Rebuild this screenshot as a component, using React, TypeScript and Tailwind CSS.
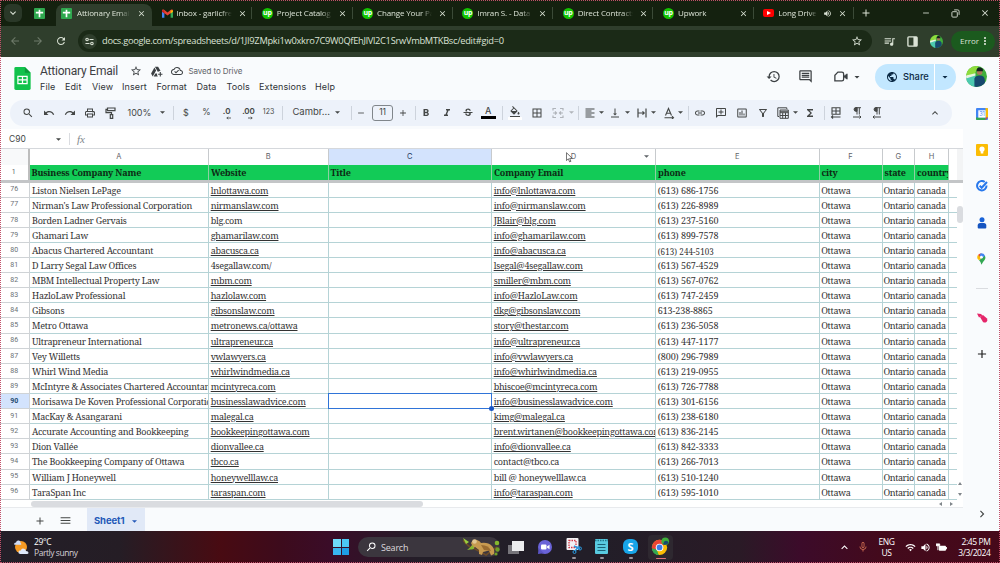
import React, { FC, ReactNode } from "react";
import {
  MdAdd,
  MdArrowBack,
  MdArrowDropDown,
  MdArrowForward,
  MdBorderAll,
  MdChevronRight,
  MdClose,
  MdExpandLess,
  MdFormatAlignLeft,
  MdFormatBold,
  MdFormatColorFill,
  MdFormatItalic,
  MdFunctions,
  MdHistory,
  MdInsertChartOutlined,
  MdKeyboardArrowDown,
  MdLink,
  MdMenu,
  MdMicNone,
  MdMoreVert,
  MdOutlineAddComment,
  MdOutlineAddToDrive,
  MdOutlineCloudDone,
  MdOutlineComment,
  MdOutlineFilterAlt,
  MdOutlinePrint,
  MdPublic,
  MdQueueMusic,
  MdRedo,
  MdRefresh,
  MdRemove,
  MdSearch,
  MdStarBorder,
  MdStrikethroughS,
  MdUndo,
  MdVerticalAlignBottom,
  MdVolumeUp,
  MdWifi,
} from "react-icons/md";

const COLS =
  "grid grid-cols-[29.5px_179.5px_119.5px_163.5px_164px_163.5px_63px_32.5px_34px_8px]";

interface IRow {
  n: number;
  name: string;
  site: string;
  email: string;
  phone: string;
  plainSite?: boolean;
  plainEmail?: boolean;
}

const rows: IRow[] = [
  { n: 76, name: "Liston Nielsen LePage", site: "lnlottawa.com", email: "info@lnlottawa.com", phone: "(613) 686-1756" },
  { n: 77, name: "Nirman's Law Professional Corporation", site: "nirmanslaw.com", email: "info@nirmanslaw.com", phone: "(613) 226-8989" },
  { n: 78, name: "Borden Ladner Gervais", site: "blg.com", email: "JBlair@blg.com", phone: "(613) 237-5160", plainSite: true },
  { n: 79, name: "Ghamari Law", site: "ghamarilaw.com", email: "info@ghamarilaw.com", phone: "(613) 899-7578" },
  { n: 80, name: "Abacus Chartered Accountant", site: "abacusca.ca", email: "info@abacusca.ca", phone: "(613) 244-5103" },
  { n: 81, name: "D Larry Segal Law Offices", site: "4segallaw.com/", email: "lsegal@4segallaw.com", phone: "(613) 567-4529", plainSite: true },
  { n: 82, name: "MBM Intellectual Property Law", site: "mbm.com", email: "smiller@mbm.com", phone: "(613) 567-0762" },
  { n: 83, name: "HazloLaw Professional", site: "hazlolaw.com", email: "info@HazloLaw.com", phone: "(613) 747-2459" },
  { n: 84, name: "Gibsons", site: "gibsonslaw.com", email: "dkg@gibsonslaw.com", phone: "613-238-8865" },
  { n: 85, name: "Metro Ottawa", site: "metronews.ca/ottawa", email: "story@thestar.com", phone: "(613) 236-5058" },
  { n: 86, name: "Ultrapreneur International", site: "ultrapreneur.ca", email: "info@ultrapreneur.ca", phone: "(613) 447-1177" },
  { n: 87, name: "Vey Willetts", site: "vwlawyers.ca", email: "info@vwlawyers.ca", phone: "(800) 296-7989" },
  { n: 88, name: "Whirl Wind Media", site: "whirlwindmedia.ca", email: "info@whirlwindmedia.ca", phone: "(613) 219-0955" },
  { n: 89, name: "McIntyre & Associates Chartered Accountants", site: "mcintyreca.com", email: "bhiscoe@mcintyreca.com", phone: "(613) 726-7788" },
  { n: 90, name: "Morisawa De Koven Professional Corporation", site: "businesslawadvice.com", email: "info@businesslawadvice.com", phone: "(613) 301-6156" },
  { n: 91, name: "MacKay & Asangarani", site: "malegal.ca", email: "kimg@malegal.ca", phone: "(613) 238-6180" },
  { n: 92, name: "Accurate Accounting and Bookkeeping", site: "bookkeepingottawa.com", email: "brent.wirtanen@bookkeepingottawa.com", phone: "(613) 836-2145" },
  { n: 93, name: "Dion Vallée", site: "dionvallee.ca", email: "info@dionvallee.ca", phone: "(613) 842-3333" },
  { n: 94, name: "The Bookkeeping Company of Ottawa", site: "tbco.ca", email: "contact@tbco.ca", phone: "(613) 266-7013", plainEmail: true },
  { n: 95, name: "William J Honeywell", site: "honeywelllaw.ca", email: "bill @ honeywelllaw.ca", phone: "(613) 510-1240", plainEmail: true },
  { n: 96, name: "TaraSpan Inc", site: "taraspan.com", email: "info@taraspan.com", phone: "(613) 595-1010" },
];

const SheetsGlyph: FC = () => (
  <svg viewBox="0 0 12 12" className="w-[11px] h-[11px] shrink-0">
    <rect width="12" height="12" rx="1" fill="#2fa84f" />
    <path d="M2 5h8M6 2v8" stroke="#fff" strokeWidth="1.8" />
  </svg>
);

const GmailGlyph: FC = () => (
  <svg viewBox="0 0 12 9" className="w-[11px] h-[9px] shrink-0">
    <path d="M0 1.5V9h2.6V4z" fill="#4285f4" />
    <path d="M12 1.5V9H9.4V4z" fill="#34a853" />
    <path d="M0 1.2C0 0 1.400-.3 2.300.5L6 3.400 9.700.5C10.600-.3 12 0 12 1.200L11.900 2.400 6 6.800.1 2.400z" fill="#ea4335" />
    <path d="M9.400 1v3.600L12 2.600V1.200z" fill="#fbbc04" />
    <path d="M2.600 1v3.600L0 2.600V1.200z" fill="#c5221f" />
  </svg>
);

const UpworkGlyph: FC = () => (
  <div className="w-[11px] h-[11px] shrink-0 rounded-full bg-[#14c400] flex items-center justify-center">
    <span className="text-[7px] leading-none font-bold text-white -mt-px tracking-[-0.3px]">up</span>
  </div>
);

const YoutubeGlyph: FC = () => (
  <div className="w-[11px] h-2 shrink-0 rounded-[2px] bg-[#f00] flex items-center justify-center">
    <svg viewBox="0 0 4 4" className="w-1 h-1">
      <path d="M0 0l4 2-4 2z" fill="#fff" />
    </svg>
  </div>
);

interface ITab {
  icon: ReactNode;
  title: string;
  sound?: boolean;
}

const tabs: ITab[] = [
  { icon: <GmailGlyph />, title: "Inbox - garlicfresh" },
  { icon: <UpworkGlyph />, title: "Project Catalog -" },
  { icon: <UpworkGlyph />, title: "Change Your Pass" },
  { icon: <UpworkGlyph />, title: "Imran S. - Data E" },
  { icon: <UpworkGlyph />, title: "Direct Contracts" },
  { icon: <UpworkGlyph />, title: "Upwork" },
  { icon: <YoutubeGlyph />, title: "Long Drive", sound: true },
];

const TabStrip: FC = () => (
  <div className="h-[26px] bg-[#14210f] flex items-end text-[#dbe3d6] text-[8px] tracking-[-0.15px] font-['Open_Sans','Noto_Sans',sans-serif]">
    <div className="w-[18px] h-[18px] ml-1 mb-1 rounded-md bg-[#2a3828] flex items-center justify-center">
      <MdKeyboardArrowDown className="w-3 h-3" />
    </div>
    <div className="ml-3 mb-[7px]">
      <SheetsGlyph />
    </div>
    <div className="ml-[11px] w-[96px] h-[22px] rounded-t-lg bg-[#2f3e2c] flex items-center pl-[5px] pb-[4px]">
      <SheetsGlyph />
      <div className="ml-[5px] w-[53px] overflow-hidden whitespace-nowrap [mask-image:linear-gradient(to_right,black_80%,transparent)]">
        Attionary Email
      </div>
      <MdClose className="ml-[7px] w-[9px] h-[9px]" />
    </div>
    {tabs.map((tab, i) => (
      <div key={i} className="w-[100.3px] h-[26px] flex items-center pl-[9.5px]">
        {tab.icon}
        <div
          className={`${tab.sound ? "w-[39px]" : "w-[55px]"} ml-[4px] shrink-0 overflow-hidden whitespace-nowrap [mask-image:linear-gradient(to_right,black_80%,transparent)]`}
        >
          {tab.title}
        </div>
        {tab.sound && <MdVolumeUp className="ml-[6px] w-[9px] h-[9px] shrink-0" />}
        <MdClose className="ml-[6px] w-[9px] h-[9px] shrink-0" />
        <div className="ml-auto w-px h-3 bg-[#3b4a37]" />
      </div>
    ))}
    <MdAdd className="ml-[6px] mb-[7px] w-3 h-3" />
    <div className="ml-auto h-[26px] flex items-center gap-5 pr-2.5">
      <MdRemove className="w-[10px] h-[10px]" />
      <svg viewBox="0 0 10 10" className="w-[9px] h-[9px]" fill="none" stroke="#dbe3d6">
        <rect x="1" y="3" width="6" height="6" rx="1" />
        <path d="M3.500 1h4Q9 1 9 2.500v4" />
      </svg>
      <MdClose className="w-[10px] h-[10px]" />
    </div>
  </div>
);

// small round portrait used in both the browser and the document header
const Avatar: FC<{ customClass: string }> = ({ customClass }) => (
  <svg viewBox="0 0 20 20" className={`${customClass} rounded-full`}>
    <rect width="20" height="20" fill="#3fae3c" />
    <path d="M0 0h12L8 8 0 10z" fill="#8fdc3d" />
    <path d="M0 10l9-2v12H0z" fill="#4cc9b0" />
    <path d="M0 9l9-2v2l-9 3z" fill="#e8f4e0" />
    <path d="M8 20V12q1-3 5-3 5 0 5 5v6z" fill="#17486e" />
    <circle cx="13" cy="6" r="2.600" fill="#a9785a" />
    <path d="M10 5q0-4 3.500-3.500T16 5z" fill="#14211c" />
  </svg>
);

const AddressBar: FC = () => (
  <div className="h-[30.5px] bg-[#2f3e2c] flex items-center text-[#dbe3d6] font-['Open_Sans','Noto_Sans',sans-serif]">
    <MdArrowBack className="ml-[9px] w-3 h-3 text-[#6e7a6a]" />
    <MdArrowForward className="ml-[11px] w-3 h-3 text-[#6e7a6a]" />
    <MdRefresh className="ml-[11px] w-3 h-3" />
    <div className="ml-[11px] w-[794px] h-[22px] rounded-full bg-[#1b2a17] flex items-center pl-1">
      <div className="w-[15px] h-[15px] rounded-full bg-[#2f3e2c] flex items-center justify-center">
        <svg viewBox="0 0 10 10" className="w-[9px] h-[9px]" fill="none" stroke="#dbe3d6" strokeWidth="1.200">
          <circle cx="2.300" cy="2.800" r="1.400" />
          <path d="M5 2.800h4.500M.5 7.200H5" />
          <circle cx="7.700" cy="7.200" r="1.400" />
        </svg>
      </div>
      <div className="ml-[5px] text-[9.3px] tracking-[-0.29px] whitespace-nowrap">
        docs.google.com/spreadsheets/d/1JI9ZMpki1w0xkro7C9W0QfEhJlVl2C1SrwVmbMTKBsc/edit#gid=0
      </div>
      <MdStarBorder className="ml-auto mr-[9px] w-3 h-3" />
    </div>
    <MdQueueMusic className="ml-[11px] w-[13px] h-[13px]" />
    <svg viewBox="0 0 12 12" className="ml-[11px] w-[11px] h-[11px]">
      <rect x="1" y="1" width="10" height="10" rx="1" fill="none" stroke="#dbe3d6" strokeWidth="1.500" />
      <rect x="7" y="1" width="4" height="10" fill="#dbe3d6" />
    </svg>
    <Avatar customClass="ml-3 w-[13px] h-[13px]" />
    <div className="ml-[8px] w-[44px] h-[21px] rounded-full bg-[#1b5a1e] flex items-center pl-[9px] text-[8px]">
      <span className="w-[18px]">Error</span>
      <MdMoreVert className="ml-[1px] w-3 h-3" />
    </div>
  </div>
);

const DocHeader: FC = () => (
  <div className="h-[43px] flex text-[#3c4043]">
    <svg viewBox="0 0 17 24" className="ml-[14px] mt-[10px] w-[17px] h-[23px]">
      <path d="M1.500 0H11l6 6v16.500q0 1.500-1.500 1.500h-14Q0 24 0 22.500v-21Q0 0 1.500 0z" fill="#12c24c" />
      <path d="M11 0l6 6h-6z" fill="#0b9a3a" />
      <path d="M3.700 9.700h9.600v7.600H3.700zM3.700 13.500h9.600M8.500 9.700v7.600" fill="none" stroke="#fff" strokeWidth="1.300" />
    </svg>
    <div className="ml-[9px] flex flex-col">
      <div className="mt-[6px] h-[17px] flex items-center">
        <div className="w-[89.5px] text-[12px] tracking-[-0.2px] font-['Roboto',sans-serif] whitespace-nowrap">Attionary Email</div>
        <MdStarBorder className="w-3 h-3" />
        <MdOutlineAddToDrive className="ml-[8px] w-[13px] h-[13px]" />
        <MdOutlineCloudDone className="ml-[8px] w-3 h-3" />
        <div className="ml-[6px] text-[8px] text-[#5f6368] whitespace-nowrap tracking-[-0.1px]">Saved to Drive</div>
      </div>
      <div className="mt-px h-[13px] flex items-center text-[9px] tracking-[0.1px] text-[#2f3337]">
        <div className="w-[25px]">File</div>
        <div className="w-[27px]">Edit</div>
        <div className="w-[30px]">View</div>
        <div className="w-[34.5px]">Insert</div>
        <div className="w-[40px]">Format</div>
        <div className="w-[30px]">Data</div>
        <div className="w-[32.5px]">Tools</div>
        <div className="w-[56px]">Extensions</div>
        <div>Help</div>
      </div>
    </div>
    <div className="ml-auto mt-[7px] h-[26px] flex items-center">
      <MdHistory className="w-[15px] h-[15px]" />
      <MdOutlineComment className="ml-[17px] w-[15px] h-[15px]" />
      <svg viewBox="0 0 16 14" className="ml-[21px] w-[14px] h-[13px]" fill="none" stroke="currentColor" strokeWidth="1.500">
        <path d="M4.500 2H9q2 0 2 2v6q0 2-2 2H1V5.500z" />
        <path d="M11 7l4-3v6z" fill="currentColor" strokeWidth="1" />
      </svg>
      <MdArrowDropDown className="ml-[3px] w-3 h-3" />
      <div className="ml-[12px] h-[26px] w-[81px] rounded-full bg-[#c2e7ff] flex items-center text-[#0b2a45]">
        <MdPublic className="ml-[11px] w-[12px] h-[12px]" />
        <div className="ml-[5px] w-[31px] text-[9.3px] font-medium">Share</div>
        <div className="w-px h-[26px] bg-white" />
        <MdArrowDropDown className="ml-[4px] w-3 h-3" />
      </div>
      <Avatar customClass="ml-[10px] mr-[13px] w-[21px] h-[21px]" />
    </div>
  </div>
);

const Slot: FC<{ w?: string; children: ReactNode }> = ({ w = "w-[20.7px]", children }) => (
  <div className={`${w} shrink-0 h-full flex items-center justify-center whitespace-nowrap`}>{children}</div>
);

const Arrow: FC<{ customClass?: string }> = ({ customClass = "w-1" }) => (
  <div className={`${customClass} shrink-0 flex justify-center`}>
    <svg viewBox="0 0 6 3" className="w-[5px] h-[3px] shrink-0" fill="currentColor">
      <path d="M0 0h6L3 3z" />
    </svg>
  </div>
);

const Divider: FC<{ customClass: string }> = ({ customClass }) => (
  <div className={`${customClass} w-px h-3.5 shrink-0 bg-[#cdd3dc]`} />
);

const icon = "w-3 h-3 shrink-0";

// paragraph mark over a direction arrow
const Pilcrow: FC<{ arrow: string }> = ({ arrow }) => (
  <svg viewBox="0 0 12 12" className={icon} stroke="currentColor" fill="none" strokeWidth="1">
    <path d="M5 .7h5M6 .7v6.800M8.300 .7v6.800" />
    <path d="M6 .5H5a1.900 1.900 0 0 0 0 3.800h1z" fill="currentColor" />
    <path d={arrow} />
  </svg>
);

const Toolbar: FC = () => (
  <div className="ml-[10px] w-[942px] h-[26px] pl-[8px] rounded-full bg-[#edf2fa] flex items-center text-[#444746] text-[9px]">
    <Slot><MdSearch className={icon} /></Slot>
    <Slot><MdUndo className={icon} /></Slot>
    <Slot><MdRedo className={icon} /></Slot>
    <Slot><MdOutlinePrint className={icon} /></Slot>
    <Slot>
      <svg viewBox="0 0 12 12" className={icon} stroke="currentColor" fill="none" strokeWidth="1.200">
        <path d="M2.500 1h7.500v2.700H2.500zM2.500 2.300H1v3.400h5.500v2M5.300 7.700h2.400v3.600H5.300z" />
      </svg>
    </Slot>
    <Slot w="w-[36px]">100%</Slot>
    <Arrow customClass="w-2.5" />
    <Divider customClass="ml-[6px] mr-px" />
    <Slot>$</Slot>
    <Slot><span className="text-[8.5px]">%</span></Slot>
    <Slot>
      <span className="font-semibold text-[8px] -mt-1">.0</span>
      <svg viewBox="0 0 6 4" className="w-[5px] h-1 -ml-1 mt-2.5" stroke="currentColor" fill="none"><path d="M6 2H1M2.500.5L1 2l1.500 1.500" /></svg>
    </Slot>
    <Slot>
      <span className="font-semibold text-[8px] -mt-1 tracking-[-0.2px]">.00</span>
      <svg viewBox="0 0 6 4" className="w-[5px] h-1 -ml-1.5 mt-2.5" stroke="currentColor" fill="none"><path d="M0 2h5M3.500.5L5 2 3.500 3.500" /></svg>
    </Slot>
    <Slot><span className="text-[7px]">123</span></Slot>
    <Divider customClass="ml-[3px] mr-[9.5px]" />
    <div className="w-[35.5px] text-[9.5px] whitespace-nowrap">Cambr...</div>
    <Arrow customClass="ml-[5px] w-2.5" />
    <Divider customClass="ml-[8px]" />
    <Slot w="w-[19px]"><MdRemove className="w-2.5 h-2.5" /></Slot>
    <div className="ml-px w-[21.5px] h-4 shrink-0 border border-[#80868b] rounded-[3px] flex items-center justify-center text-[8.5px]">11</div>
    <Slot w="w-[19px]"><MdAdd className="w-2.5 h-2.5" /></Slot>
    <Divider customClass="ml-[2.5px]" />
    <Slot><MdFormatBold className={icon} /></Slot>
    <Slot><MdFormatItalic className={icon} /></Slot>
    <Slot><MdStrikethroughS className={icon} /></Slot>
    <Slot>
      <div className="flex flex-col items-center">
        <span className="text-[9px] leading-[10px] font-medium">A</span>
        <div className="w-[15px] h-[3px] bg-black" />
      </div>
    </Slot>
    <Divider customClass="ml-[3px]" />
    <Slot w="w-[24px]">
      <div className="flex flex-col items-center">
        <MdFormatColorFill className="w-3 h-3" />
        <div className="w-[14px] h-[3px] bg-white -mt-px" />
      </div>
    </Slot>
    <Slot w="w-5"><MdBorderAll className={icon} /></Slot>
    <Slot w="w-[22px]">
      <svg viewBox="0 0 12 12" className="w-3 h-3 text-[#b0b4ba]" stroke="currentColor" fill="none" strokeWidth="1.200">
        <path d="M1 3.500V1.500h3M8 1.500h3v2M1 8.500v2h3M8 10.500h3v-2M1 6h3.500M3 4.500L4.500 6 3 7.500M11 6H7.500M9 4.500L7.500 6 9 7.500" />
      </svg>
    </Slot>
    <Arrow customClass="w-[5px] text-[#b0b4ba]" />
    <Divider customClass="ml-1" />
    <div className="w-[2px]" />
    <Slot w="w-[18px]"><MdFormatAlignLeft className={icon} /></Slot>
    <Arrow customClass="w-[5px]" />
    <div className="w-[1.5px]" />
    <Slot w="w-5"><MdVerticalAlignBottom className={icon} /></Slot>
    <Arrow />
    <div className="w-[2.5px]" />
    <Slot w="w-5">
      <svg viewBox="0 0 12 12" className="w-3 h-3" stroke="currentColor" fill="none" strokeWidth="1.200">
        <path d="M2 1.500v9M10 1.500v9M2 6h6M6.500 4.300L8.200 6 6.500 7.700" />
      </svg>
    </Slot>
    <Arrow />
    <div className="w-[3px]" />
    <Slot w="w-5">
      <svg viewBox="0 0 12 12" className="w-3 h-3" stroke="currentColor" fill="none" strokeWidth="1.100">
        <path d="M2.500 8.500L5.500 1.500l3 7M3.500 6.300h4M1.500 10.700h9M9 9.200l1.500 1.500L9 12" />
      </svg>
    </Slot>
    <Arrow customClass="w-[3px]" />
    <Divider customClass="ml-[6px] mr-[1.5px]" />
    <Slot><MdLink className={icon} /></Slot>
    <Slot><MdOutlineAddComment className={`${icon} -scale-x-100`} /></Slot>
    <Slot><MdInsertChartOutlined className={icon} /></Slot>
    <Slot><MdOutlineFilterAlt className={icon} /></Slot>
    <Slot>
      <svg viewBox="0 0 12 12" className="w-3 h-3" stroke="currentColor" fill="none">
        <path d="M2 9.500H.8V.8h9V2M3 3h8.300v8.300H3zM3 5.700h8.300M3 8.500h8.300M5.700 5.700v5.600M8.500 5.700v5.600M3 4.300h8" />
      </svg>
    </Slot>
    <Arrow customClass="w-[3px]" />
    <Slot w="w-[26px]"><MdFunctions className={icon} /></Slot>
    <Divider customClass="ml-px mr-px" />
    <Slot>
      <svg viewBox="0 0 12 12" className="w-3 h-3" stroke="currentColor" fill="none" strokeWidth="1.100">
        <path d="M2 .8h8v6.500H2zM6 .8v6.500M2 4h8M10.500 10H1.500M3 8.500L1.500 10 3 11.500" />
      </svg>
    </Slot>
    <Slot><Pilcrow arrow="M2 10h8M8.500 8.500L10 10l-1.500 1.500" /></Slot>
    <Slot><Pilcrow arrow="M10 10H2M3.500 8.500L2 10l1.500 1.500" /></Slot>
    <MdExpandLess className="ml-auto mr-[11px] w-3 h-3" />
  </div>
);

const FormulaBar: FC = () => (
  <div className="mt-[3px] h-[20px] w-[963px] pt-[2px] bg-white border-b border-[#d5d8dc] flex items-center text-[9px] text-[#444746]">
    <div className="ml-[9px] w-[45px] text-[8.5px]">C90</div>
    <Arrow customClass="w-2" />
    <div className="ml-[7px] w-px h-3 bg-[#dadce0]" />
    <div className="ml-[7px] text-[11px] italic text-[#80868b] font-['Liberation_Serif',serif]">fx</div>
  </div>
);

const ColHead: FC<{ customClass?: string; children?: ReactNode }> = ({ customClass = "", children }) => (
  <div className={`${customClass} border-r border-[#c7cacd] flex items-center justify-center relative`}>{children}</div>
);

const Cell: FC<{ customClass?: string; children?: ReactNode }> = ({
  customClass = "pl-[1.7px] tracking-[-0.25px]",
  children,
}) => (
  <div className={`${customClass} border-r border-b border-[#b5d3d6] overflow-hidden whitespace-nowrap leading-[15px]`}>
    {children}
  </div>
);

const Grid: FC = () => (
  <div className="w-[957px] bg-white">
    <div className={`${COLS} h-[16.5px] text-[7.5px] text-[#5f6368]`}>
      <div className="bg-[#f8f9fa] border-r-2 border-[#bdbdbd]" />
      <ColHead>A</ColHead>
      <ColHead>B</ColHead>
      <ColHead customClass="bg-[#d3e3fd] text-[#1f3a5f]">C</ColHead>
      <ColHead>
        D
        <div className="absolute right-[6px]"><Arrow customClass="w-[6px]" /></div>
        <svg viewBox="0 0 8 12" className="absolute left-[74px] top-[3px] w-[7px] h-[11px]">
          <path d="M.5.5v9l2.200-2 1.400 3.500 1.500-.6L4.200 7h3z" fill="#fff" stroke="#333" strokeWidth=".8" />
        </svg>
      </ColHead>
      <ColHead>E</ColHead>
      <ColHead>F</ColHead>
      <ColHead>G</ColHead>
      <ColHead>H</ColHead>
      <div />
    </div>
    <div className={`${COLS} h-[15px] font-['Noto_Serif','Droid_Serif','DejaVu_Serif_Condensed','DejaVu_Serif',serif] text-[9px] font-bold tracking-[-0.17px] text-[#0d2a14]`}>
      <div className="border-r-2 border-[#bdbdbd] flex items-center justify-center text-[7px] font-normal text-[#5f6368] font-['Roboto',sans-serif]">1</div>
      {["Business Company Name", "Website", "Title", "Company Email", "phone", "city", "state", "country"].map((title) => (
        <div key={title} className="bg-[#12cb57] pl-[2px] border-r border-[#8fcfa2] overflow-hidden whitespace-nowrap leading-[15px]">
          {title}
        </div>
      ))}
      <div />
    </div>
    <div className="h-[2.5px] bg-[#c3c5c7]" />
    {rows.map((row) => (
      <div
        key={row.n}
        className={`${COLS} h-[15.12px] font-['Noto_Serif','Droid_Serif','DejaVu_Serif_Condensed','DejaVu_Serif',serif] text-[9px] text-[#333]`}
      >
        <div
          className={`${row.n === 90 ? "bg-[#d3e3fd] font-bold text-[#1f4a70]" : "text-[#6b7075]"} border-r border-b border-[#cfd3d6] flex items-center justify-center text-[7px] font-['Roboto',sans-serif]`}
        >
          {row.n}
        </div>
        <Cell customClass="pl-[2.5px] tracking-[-0.25px]">{row.name}</Cell>
        <Cell customClass={row.plainSite ? "pl-[1.7px] tracking-[-0.28px]" : "pl-[1.7px] underline tracking-[-0.28px]"}>
          {row.site}
        </Cell>
        {row.n === 90 ? (
          <div className="relative border-r border-b border-[#b5d3d6]">
            <div className="absolute -left-px -top-px -right-px -bottom-px border-[1.5px] border-[#2f74d8]" />
            <div className="absolute -right-[3px] -bottom-[3px] z-10 w-[5px] h-[5px] rounded-full bg-[#1a56c4]" />
          </div>
        ) : (
          <Cell />
        )}
        <Cell customClass={row.plainEmail ? "pl-[1.7px] tracking-[-0.28px]" : "pl-[1.7px] underline tracking-[-0.28px]"}>
          {row.email}
        </Cell>
        <Cell customClass={row.n === 80 ? "pl-[1.7px] text-[8px] pt-px tracking-[0.1px]" : "pl-[1.7px] tracking-[-0.07px]"}>
          {row.phone}
        </Cell>
        <Cell>Ottawa</Cell>
        <Cell customClass="pl-[1px] tracking-[-0.4px]">Ontario</Cell>
        <Cell customClass="pl-[1.7px] tracking-[-0.3px]">canada</Cell>
        <div className="border-b border-[#b5d3d6]" />
      </div>
    ))}
  </div>
);

const SidePanel: FC = () => (
  <div className="w-[37px] flex flex-col items-center">
    <svg viewBox="0 0 12 12" className="mt-[8px] w-3 h-3">
      <rect width="12" height="12" rx="1" fill="#4285f4" />
      <path d="M9.500 0H11q1 0 1 1v8.500H9.500z" fill="#fbbc04" />
      <path d="M0 9.500h9.500V12H1q-1 0-1-1z" fill="#34a853" />
      <path d="M9.500 9.500H12L9.500 12z" fill="#ea4335" />
      <rect x="2.300" y="2.300" width="7.300" height="7.300" fill="#fff" />
      <text x="6" y="8" fontSize="5.500" textAnchor="middle" fill="#4285f4">31</text>
    </svg>
    <div className="mt-[24px] w-3 h-3 rounded-[1px] bg-[#fbbc04] flex items-center justify-center">
      <svg viewBox="0 0 6 8" className="w-[6px] h-2" fill="#fff">
        <circle cx="3" cy="3" r="2.600" />
        <rect x="1.700" y="5" width="2.600" height="2.500" />
      </svg>
    </div>
    <svg viewBox="0 0 12 12" className="mt-[24px] w-3 h-3" fill="none" stroke="#2878ec" strokeWidth="2">
      <path d="M8.700 2A4.700 4.700 0 1 0 10.500 5.500" />
      <path d="M3.700 5.700l2 2L11 2" />
    </svg>
    <svg viewBox="0 0 12 12" className="mt-[25px] w-3 h-3">
      <circle cx="6" cy="2.800" r="2.500" fill="#1a63d8" />
      <path d="M1.700 10.500V8.500q0-2.500 2.500-2.500h3.600q2.500 0 2.500 2.500v2q0 1-1 1H2.700q-1 0-1-1z" fill="#1554c0" />
    </svg>
    <svg viewBox="0 0 10 13" className="mt-[24px] w-[9px] h-3">
      <path d="M5 13Q4.500 10 2.300 8L8.800 2.700Q10 5 8.500 7.500 6 10 5 13z" fill="#34a853" />
      <path d="M.8 6.500Q-.5 4 1.300 1.700L5 5 2.300 8z" fill="#fbbc04" />
      <path d="M1.300 1.700Q3 0 5 0L3 4z" fill="#ea4335" />
      <path d="M4 .1Q7.500-.2 8.800 2.700L5.500 6 3 3z" fill="#4285f4" />
      <circle cx="5" cy="4.500" r="1.500" fill="#fff" />
    </svg>
    <div className="mt-[23px] w-3 h-px bg-[#dadce0]" />
    <svg viewBox="0 0 12 12" className="mt-[23px] w-3 h-3" fill="#e5266a">
      <path d="M1 1.500l4 .500L6.500 3.500 3 5.500z" />
      <path d="M4 5l3-2 4 3.500q1 2-.5 3.500-2 1.200-3.500 0z" />
    </svg>
    <MdAdd className="mt-[23px] w-[14px] h-[14px] text-[#1f1f1f]" />
    <MdChevronRight className="mt-auto mb-[10px] w-3.5 h-3.5 text-[#444746]" />
  </div>
);

const SheetTabs: FC = () => (
  <div className="h-[23px] flex items-center text-[#444746]">
    <MdAdd className="ml-[34px] mt-[2px] w-3 h-3" />
    <MdMenu className="ml-[13px] mt-[2px] w-[13px] h-[13px]" />
    <div className="ml-[15px] w-[58px] h-full bg-[#e1e9f7] flex items-center pl-[7px] pt-[3px] text-[9.5px] font-bold text-[#2459b8]">
      <span className="w-[38px] tracking-[-0.1px]">Sheet1</span>
      <Arrow />
    </div>
  </div>
);

const Taskbar: FC = () => (
  <div className="h-8 flex items-center text-white text-[8.5px] leading-[11px] font-['Open_Sans','Noto_Sans',sans-serif] bg-[linear-gradient(to_right,#231f28_0%,#251d25_12%,#480b12_22%,#3d0b1c_28%,#3a0c28_33%,#231e28_42%,#221e28_60%,#2a1a26_74%,#3c0b2a_80%,#430a1c_88%,#46091a_100%)]">
    <svg viewBox="0 0 17 16" className="ml-[13px] w-[17px] h-4">
      <circle cx="8" cy="8" r="6" fill="#f59a23" />
      <path d="M1 5.500q0-2 2-2 .5-2.500 3-2 2 .5 1.500 2.500 1 .3.700 1.700H2z" fill="#cfdcf5" />
      <path d="M7 15q-2-.5-1.500-2.300.5-1.500 2.200-1.200 1-2.500 3.300-1.700 1.800.5 2 2.200 2.500 0 2.500 1.700 0 1.300-1.500 1.300z" fill="#dfe8fa" />
    </svg>
    <div className="ml-[4px] w-[299px] tracking-[-0.4px]">
      <div>29°C</div>
      <div className="text-[#d5d0d6] tracking-[-0.45px]">Partly sunny</div>
    </div>
    <div className="w-4 h-4 grid grid-cols-2 gap-px">
      <div className="bg-[#6fdcfb]" />
      <div className="bg-[#4cc8f5]" />
      <div className="bg-[#38b6ef]" />
      <div className="bg-[#1e9ee6]" />
    </div>
    <div className="ml-[9px] w-[142px] h-5 rounded-full bg-[#3b363e] flex items-center pl-[7px]">
      <MdSearch className="w-3 h-3 -scale-x-100" />
      <span className="ml-[4px] text-[9px] tracking-[-0.2px] text-[#dcd8dd]">Search</span>
      <svg viewBox="0 0 37 20" className="ml-auto w-[37px] h-5">
        <path d="M0 3q5 7 12 9 6 3 11 6 4-3 11-8" stroke="#6a4a28" strokeWidth="1.800" fill="none" />
        <path d="M8 6q2-4.500 6-3 3 1 4 3 7-1 11 3 3 3 2 8l-3 1.500-2-5-6 1.500-1 3-3-1v-4l-4-3-3 2.500-2-1.500 2-3z" fill="#c79a50" />
        <circle cx="11.500" cy="4.500" r="2.300" fill="#e2c893" />
        <path d="M18 8q8 0 10 6l-7-1z" fill="#9a6c30" />
        <circle cx="34" cy="6" r="2.300" fill="#84b82e" />
        <circle cx="34.500" cy="12.500" r="2.200" fill="#6f9e27" />
        <circle cx="33" cy="17" r="1.600" fill="#6f9e27" />
        <path d="M0 1l6 4-3 2z" fill="#9ad13c" />
        <path d="M4 13l6-5 1 4z" fill="#84b82e" />
      </svg>
    </div>
    <svg viewBox="0 0 16 15" className="ml-[8px] w-4 h-[15px]">
      <rect x="0" y="5" width="11" height="9" fill="#76747a" />
      <rect x="4" y="1" width="12" height="10" fill="#ececee" />
    </svg>
    <svg viewBox="0 0 16 16" className="ml-[13px] w-4 h-4">
      <circle cx="8" cy="8" r="7" fill="#6a63d8" />
      <path d="M1.500 9L1 15l6-.8z" fill="#5a54c4" />
      <rect x="4" y="5.500" width="5.500" height="5" rx="1" fill="#fff" />
      <path d="M10 7.500l2.500-1.700v4.400L10 8.500z" fill="#fff" />
    </svg>
    <div className="ml-[13px] w-4 h-full flex flex-col items-center pt-[6px]">
      <svg viewBox="0 0 16 18" className="w-4 h-[18px]">
        <rect x=".5" y="1" width="12" height="12" rx="1" fill="#f2f2f4" />
        <rect x="3" y="3.500" width="7" height="7" fill="none" stroke="#d23a48" strokeWidth="1.300" strokeDasharray="1.500 1" />
        <path d="M9 14l4-5M8 9l6 3" stroke="#2b9be0" strokeWidth="1.500" />
        <circle cx="8.500" cy="15" r="1.500" fill="none" stroke="#2b9be0" />
        <circle cx="14" cy="11.500" r="1.500" fill="none" stroke="#2b9be0" />
      </svg>
      <div className="mt-[2px] w-1 h-[1.5px] rounded bg-[#9b959d]" />
    </div>
    <div className="ml-[13px] w-[13px] h-full flex flex-col items-center pt-[8px]">
      <svg viewBox="0 0 13 15" className="w-[13px] h-[15px]">
        <rect width="13" height="15" rx="1" fill="#59cbe0" />
        <path d="M0 1.500h13" stroke="#23788c" strokeWidth="1.500" strokeDasharray="1.500 1" />
        <path d="M2.500 5.500h8M2.500 8.500h8M2.500 11.500h8" stroke="#1b6276" />
      </svg>
      <div className="mt-[3px] w-1 h-[1.5px] rounded bg-[#9b959d]" />
    </div>
    <div className="ml-[15px] w-[15px] h-full flex flex-col items-center pt-2">
      <div className="w-[15px] h-[15px] rounded-[6px] bg-[#18a5e8] flex items-center justify-center text-[11px] font-bold">S</div>
      <div className="mt-[3px] w-1 h-[1.5px] rounded bg-[#9b959d]" />
    </div>
    <div className="ml-[10px] w-[25px] h-[25px] rounded bg-[#2e2830] flex flex-col items-center pt-[2px]">
      <svg viewBox="0 0 20 20" className="w-[19px] h-[19px]">
        <circle cx="9" cy="11" r="8" fill="#fbbc04" />
        <path d="M9 11L2 7q2.500-4 7-4 5 0 7 4z" fill="#ea4335" />
        <path d="M2 7l4 6.500L8 19Q3 18.500 1.500 14T2 7z" fill="#34a853" />
        <path d="M9 11L2 7Q.5 9.500 1 12l5 2z" fill="#ea4335" />
        <path d="M1 12l4.500 1L8 19Q2 18 1 12z" fill="#34a853" />
        <circle cx="9" cy="11" r="4" fill="#fff" />
        <circle cx="9" cy="11" r="3" fill="#3b7de8" />
        <circle cx="15" cy="4.500" r="4" fill="#3fae3c" />
        <path d="M13 8q0-4 3-4 2 0 2.500 2-1.500 3-5.500 2z" fill="#17486e" />
      </svg>
      <div className="mt-[2px] w-2.5 h-[1.5px] rounded bg-[#e0717a]" />
    </div>
    <MdExpandLess className="ml-auto w-[13px] h-[13px]" />
    <MdMicNone className="ml-[6px] w-3 h-3 text-[#c9694f]" />
    <div className="ml-[9px] w-[18px] text-center tracking-[-0.4px]">
      <div>ENG</div>
      <div>US</div>
    </div>
    <MdWifi className="ml-[9px] w-[11px] h-[11px]" />
    <MdVolumeUp className="ml-[4px] w-[11px] h-[11px]" />
    <svg viewBox="0 0 12 10" className="ml-[5px] w-[11px] h-[9px]">
      <rect x="3" y="3" width="8" height="5.500" rx="1" fill="#fff" />
      <path d="M0 1h4v2H0zM2 3v5" stroke="#fff" fill="#fff" />
      <path d="M11 4.500h1v2.500h-1z" fill="#fff" />
    </svg>
    <div className="ml-[11px] mr-[9.5px] w-[33px] flex flex-col items-end whitespace-nowrap tracking-[-0.4px]">
      <div>2:45 PM</div>
      <div>3/3/2024</div>
    </div>
  </div>
);

const App: FC = () => {
  return (
    <div className="relative w-[1000px] h-[563px] overflow-hidden bg-[#f9fbfd] font-['Inter','Roboto',sans-serif]">
      <TabStrip />
      <AddressBar />
      <DocHeader />
      <div className="flex h-[431.5px]">
        <div className="w-[963px] flex flex-col">
          <Toolbar />
          <FormulaBar />
          <div className="flex">
            <Grid />
            <div className="w-[6px] h-[351.5px] bg-white flex flex-col items-center">
              <div className="w-full h-[31.5px] bg-[#f3f4f5]" />
              <div className="w-full h-[2.5px] bg-[#c3c5c7]" />
              <div className="mt-[23px] w-[6px] h-[17px] rounded bg-[#dadce0]" />
              <div className="mt-auto mb-1 flex flex-col gap-2 text-[#80868b]">
                <svg viewBox="0 0 4 3" className="w-[4px] h-[3px]" fill="currentColor"><path d="M0 3h4L2 0z" /></svg>
                <svg viewBox="0 0 4 3" className="w-[4px] h-[3px]" fill="currentColor"><path d="M0 0h4L2 3z" /></svg>
              </div>
            </div>
          </div>
          <div className="h-[8px] bg-white border-b border-[#e8eaed] flex items-center">
            <div className="ml-[31px] w-[392px] h-[6px] rounded-full bg-[#dadce0]" />
            <div className="ml-auto mr-[10px] flex gap-2 text-[#80868b]">
              <svg viewBox="0 0 3 4" className="w-[3px] h-[4px]" fill="currentColor"><path d="M3 0v4L0 2z" /></svg>
              <svg viewBox="0 0 3 4" className="w-[3px] h-[4px]" fill="currentColor"><path d="M0 0v4l3-2z" /></svg>
            </div>
          </div>
          <SheetTabs />
        </div>
        <SidePanel />
      </div>
      <Taskbar />
      <div className="absolute inset-0 border border-dotted border-[#c2506a] pointer-events-none" />
    </div>
  );
};

export default App;
